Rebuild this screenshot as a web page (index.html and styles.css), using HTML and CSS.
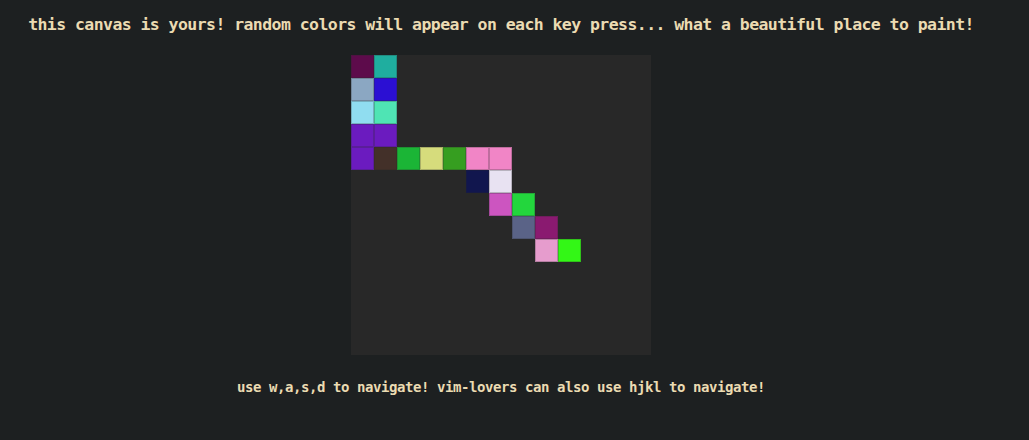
FILE: index.html
```html
<!DOCTYPE html>
<html>
<head>
<meta charset="utf-8">
<link rel="stylesheet" href="styles.css">
</head>
<body>
<main class="page">
  <p class="title">this canvas is yours! random colors will appear on each key press... what a beautiful place to paint!</p>
  <div class="canvas">
    <div class="cell" style="grid-area:1/1;background:#5d0b4b"></div>
    <div class="cell" style="grid-area:1/2;background:#1fae9f"></div>
    <div class="cell" style="grid-area:2/1;background:#8ba7c2"></div>
    <div class="cell" style="grid-area:2/2;background:#2b0fd3"></div>
    <div class="cell" style="grid-area:3/1;background:#90ddf0"></div>
    <div class="cell" style="grid-area:3/2;background:#4fe4b4"></div>
    <div class="cell" style="grid-area:4/1;background:#6b1bbf"></div>
    <div class="cell" style="grid-area:4/2;background:#6b1bbf"></div>
    <div class="cell" style="grid-area:5/1;background:#6b1bbf"></div>
    <div class="cell" style="grid-area:5/2;background:#433029"></div>
    <div class="cell" style="grid-area:5/3;background:#1bb536"></div>
    <div class="cell" style="grid-area:5/4;background:#d6dc7c"></div>
    <div class="cell" style="grid-area:5/5;background:#369e20"></div>
    <div class="cell" style="grid-area:5/6;background:#f185c6"></div>
    <div class="cell" style="grid-area:5/7;background:#f185c6"></div>
    <div class="cell" style="grid-area:6/6;background:#11164e"></div>
    <div class="cell" style="grid-area:6/7;background:#e8e2f2"></div>
    <div class="cell" style="grid-area:7/7;background:#cc55c0"></div>
    <div class="cell" style="grid-area:7/8;background:#23d63d"></div>
    <div class="cell" style="grid-area:8/8;background:#5a6387"></div>
    <div class="cell" style="grid-area:8/9;background:#8a1a70"></div>
    <div class="cell" style="grid-area:9/9;background:#e69ccd"></div>
    <div class="cell" style="grid-area:9/10;background:#33f716"></div>
  </div>
  <p class="help">use w,a,s,d to navigate! vim-lovers can also use hjkl to navigate!</p>
</main>
</body>
</html>
```
FILE: styles.css
```css
html, body {
  margin: 0;
  padding: 0;
  background: #1d2021;
}
.page {
  width: 1002px;
  display: flex;
  flex-direction: column;
  align-items: center;
  font-family: "DejaVu Sans Mono", "Liberation Mono", monospace;
  font-weight: bold;
  color: #ebdbb2;
}
.title {
  margin: 15px 0 0;
  font-size: 16.5px;
  letter-spacing: -0.57px;
  line-height: 20px;
  white-space: nowrap;
}
.canvas {
  margin-top: 20px;
  width: 300px;
  height: 300px;
  background: #282828;
  display: grid;
  grid-template-columns: repeat(13, 23px);
  grid-template-rows: repeat(13, 23px);
}
.cell {
  box-shadow: inset 0 0 0 1px rgba(40, 40, 40, 0.25);
}
.help {
  margin: 22px 0 0;
  font-size: 14px;
  letter-spacing: -0.43px;
  line-height: 20px;
  white-space: nowrap;
}
```
